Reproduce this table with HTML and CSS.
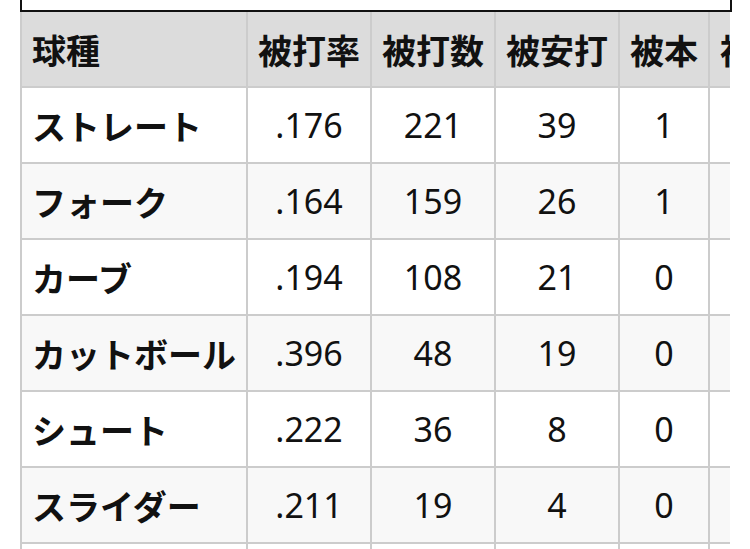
FILE: index.html
```html
<!DOCTYPE html>
<html lang="ja">
<head>
<meta charset="utf-8">
<link rel="stylesheet" href="styles.css">
</head>
<body>
<div class="page">
  <div class="topbox"></div>
  <div class="table-wrap">
    <table class="stats">
      <colgroup>
        <col class="c-name">
        <col class="c-num">
        <col class="c-num">
        <col class="c-num">
        <col class="c-small">
        <col class="c-more">
      </colgroup>
      <thead>
        <tr>
          <th>球種</th>
          <th>被打率</th>
          <th>被打数</th>
          <th>被安打</th>
          <th>被本</th>
          <th>被四球</th>
        </tr>
      </thead>
      <tbody>
        <tr><td class="name">ストレート</td><td>.176</td><td>221</td><td>39</td><td>1</td><td>5</td></tr>
        <tr><td class="name">フォーク</td><td>.164</td><td>159</td><td>26</td><td>1</td><td>3</td></tr>
        <tr><td class="name">カーブ</td><td>.194</td><td>108</td><td>21</td><td>0</td><td>2</td></tr>
        <tr><td class="name">カットボール</td><td>.396</td><td>48</td><td>19</td><td>0</td><td>1</td></tr>
        <tr><td class="name">シュート</td><td>.222</td><td>36</td><td>8</td><td>0</td><td>1</td></tr>
        <tr><td class="name">スライダー</td><td>.211</td><td>19</td><td>4</td><td>0</td><td>0</td></tr>
        <tr><td class="name">チェンジアップ</td><td>.250</td><td>8</td><td>2</td><td>0</td><td>0</td></tr>
      </tbody>
    </table>
  </div>
</div>
</body>
</html>
```

FILE: styles.css
```css
html, body {
  margin: 0;
  padding: 0;
  background: #ffffff;
}

body {
  font-family: "Noto Sans", "Noto Sans CJK JP", sans-serif;
  color: #111111;
}

.page {
  padding: 0 20px;
}

.topbox {
  width: 708px;
  height: 10px;
  border: 2px solid #111111;
  border-top: none;
  background: #ffffff;
}

.table-wrap {
  width: 710px;
  overflow: hidden;
}

.stats {
  border-collapse: collapse;
  table-layout: fixed;
  width: 824px;
  font-size: 34px;
}

.c-name { width: 226px; }
.c-num { width: 124px; }
.c-small { width: 90px; }
.c-more { width: 136px; }

.stats th,
.stats td {
  border: 2px solid #cccccc;
  height: 74px;
  padding: 0 10px;
  vertical-align: middle;
  white-space: nowrap;
  overflow: hidden;
}

.stats thead th {
  background: #dcdcdc;
  border-top: none;
  font-weight: 700;
  text-align: left;
}

.stats td {
  text-align: center;
  font-weight: 400;
}

.stats td.name {
  text-align: left;
  font-weight: 700;
}

.stats tbody tr:nth-child(even) td {
  background: #f8f8f8;
}
```
